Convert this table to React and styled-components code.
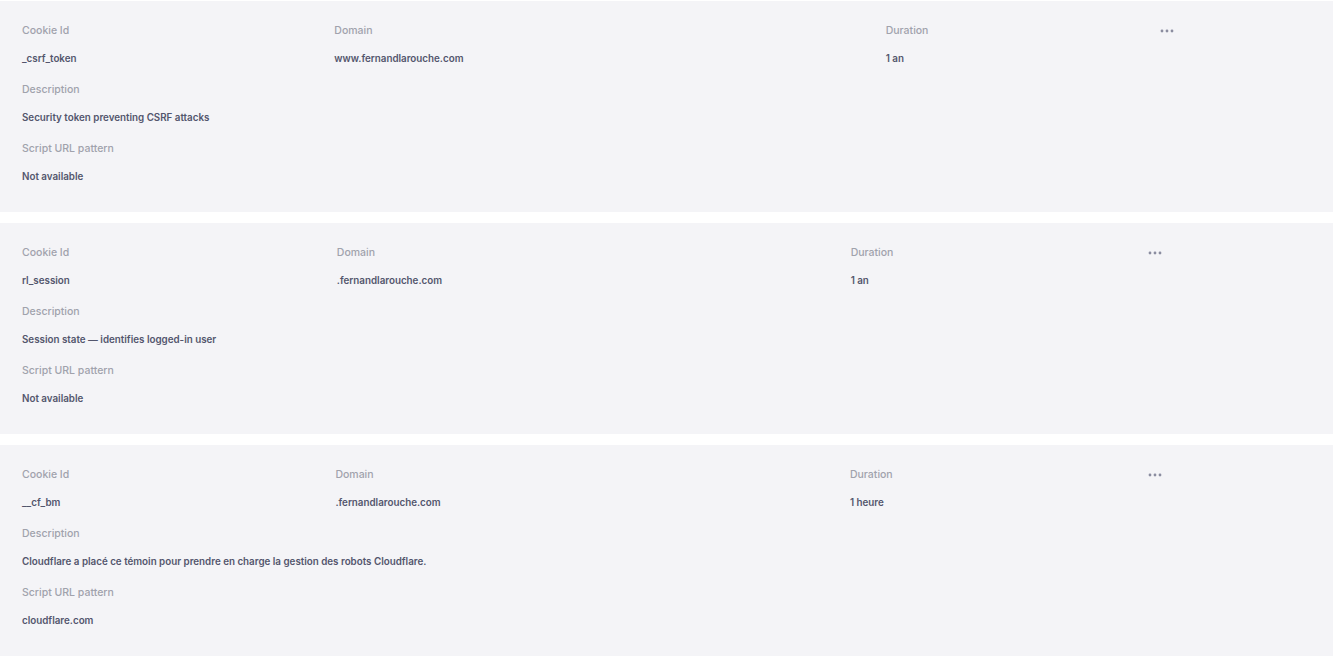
import React from 'react';
import styled, { createGlobalStyle } from 'styled-components';

const Global = createGlobalStyle`
  html, body {
    margin: 0;
    padding: 0;
    background: #ffffff;
  }
  body {
    font-family: Inter, "Noto Sans", sans-serif;
  }
`;

const Page = styled.div`
  width: 1333px;
  padding-top: 1px;
  display: flex;
  flex-direction: column;
  gap: 11px;
`;

const Card = styled.section`
  background: #f4f4f7;
  padding: 16px 22px 21px 22px;
  display: flex;
  flex-direction: column;
  gap: 3px;
`;

const Grid = styled.table`
  width: 100%;
  border-collapse: collapse;
  table-layout: auto;

  th, td {
    padding: 0 43px 0 0;
    text-align: left;
    line-height: 28px;
    white-space: nowrap;
  }
  th:last-child, td:last-child {
    padding-right: 0;
  }
`;

const Label = styled.div`
  font-size: 10.5px;
  font-weight: 500;
  color: #a0a2ac;
  line-height: 28px;
`;

const HeadCell = styled.th`
  font-size: 10.5px;
  font-weight: 500;
  color: #a0a2ac;
`;

const Value = styled.div`
  font-size: 9.8px;
  font-weight: 600;
  color: #53566d;
  line-height: 28px;
`;

const ValueCell = styled.td`
  font-size: 9.8px;
  font-weight: 600;
  color: #53566d;
`;

const Field = styled.div``;

const MoreButton = styled.button`
  width: 47px;
  height: 28px;
  padding: 0;
  border: 0;
  background: transparent;
  display: flex;
  align-items: center;
  justify-content: flex-start;
  cursor: pointer;
`;

const Dots = () => (
  <svg width="14" height="4" viewBox="0 0 14 4">
    <circle cx="2" cy="2" r="1.4" fill="#8b8da0" />
    <circle cx="7" cy="2" r="1.4" fill="#8b8da0" />
    <circle cx="12" cy="2" r="1.4" fill="#8b8da0" />
  </svg>
);

const cookies = [
  {
    id: '_csrf_token',
    domain: 'www.fernandlarouche.com',
    duration: '1 an',
    description: 'Security token preventing CSRF attacks',
    pattern: 'Not available',
  },
  {
    id: 'rl_session',
    domain: '.fernandlarouche.com',
    duration: '1 an',
    description: 'Session state \u2014 identifies logged-in user',
    pattern: 'Not available',
  },
  {
    id: '__cf_bm',
    domain: '.fernandlarouche.com',
    duration: '1 heure',
    description: 'Cloudflare a placé ce témoin pour prendre en charge la gestion des robots Cloudflare.',
    pattern: 'cloudflare.com',
  },
];

const CookieCard = ({ cookie }) => (
  <Card>
    <Grid>
      <thead>
        <tr>
          <HeadCell>Cookie Id</HeadCell>
          <HeadCell>Domain</HeadCell>
          <HeadCell>Duration</HeadCell>
          <HeadCell>
            <MoreButton aria-label="More"><Dots /></MoreButton>
          </HeadCell>
        </tr>
      </thead>
      <tbody>
        <tr>
          <ValueCell>{cookie.id}</ValueCell>
          <ValueCell>{cookie.domain}</ValueCell>
          <ValueCell>{cookie.duration}</ValueCell>
          <ValueCell />
        </tr>
      </tbody>
    </Grid>
    <Field>
      <Label>Description</Label>
      <Value>{cookie.description}</Value>
    </Field>
    <Field>
      <Label>Script URL pattern</Label>
      <Value>{cookie.pattern}</Value>
    </Field>
  </Card>
);

export default function App() {
  return (
    <>
      <Global />
      <Page>
        {cookies.map((c) => (
          <CookieCard key={c.id} cookie={c} />
        ))}
      </Page>
    </>
  );
}
